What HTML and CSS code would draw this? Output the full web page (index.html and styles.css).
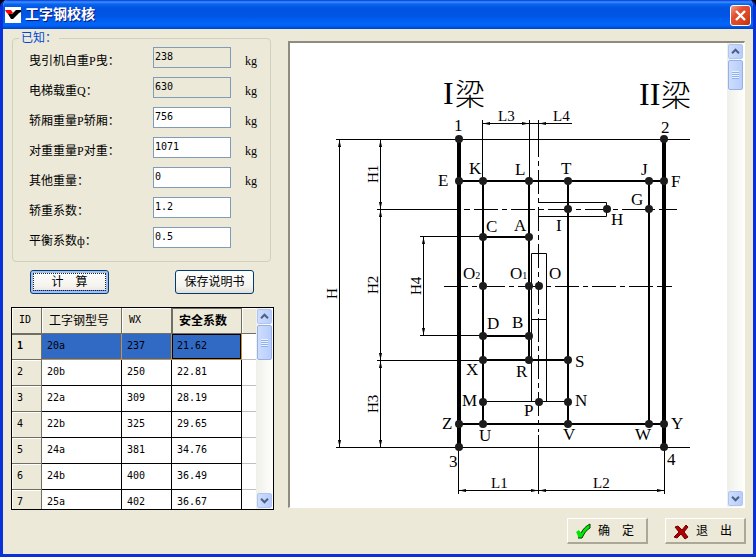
FILE: index.html
```html
<!DOCTYPE html>
<html lang="zh-CN">
<head>
<meta charset="utf-8">
<title>工字钢校核</title>
<link rel="stylesheet" href="styles.css">
</head>
<body>
<div class="window">
  <header class="titlebar">
    <svg class="app-icon" viewBox="0 0 16 16" aria-hidden="true">
      <rect width="16" height="16" fill="#fff"/>
      <path d="M5 6l2 1 4-4h5v2l-2 1-6 6H6L3 7z" fill="#000"/>
      <path d="M0 3h6l2 3-2 1H3L1 5z" fill="#f00"/>
    </svg>
    <h1>工字钢校核</h1>
    <button class="close" type="button" aria-label="关闭">
      <svg viewBox="0 0 19 19"><path d="M5 5l9 9M14 5l-9 9" stroke="#fff" stroke-width="2.4"/></svg>
    </button>
  </header>

  <main class="content">
    <section class="left">
      <fieldset>
        <legend>已知：</legend>
        <div class="field"><label for="f1">曳引机自重P曳：</label><input id="f1" type="text" value="238" readonly><span class="unit">kg</span></div>
        <div class="field"><label for="f2">电梯载重Q：</label><input id="f2" type="text" value="630" readonly><span class="unit">kg</span></div>
        <div class="field"><label for="f3">轿厢重量P轿厢：</label><input id="f3" type="text" value="756"><span class="unit">kg</span></div>
        <div class="field"><label for="f4">对重重量P对重：</label><input id="f4" type="text" value="1071"><span class="unit">kg</span></div>
        <div class="field"><label for="f5">其他重量：</label><input id="f5" type="text" value="0"><span class="unit">kg</span></div>
        <div class="field"><label for="f6">轿重系数：</label><input id="f6" type="text" value="1.2"></div>
        <div class="field"><label for="f7">平衡系数ф：</label><input id="f7" type="text" value="0.5"></div>
      </fieldset>
      <div class="actions">
        <button class="xp default" type="button">计　算</button>
        <button class="xp" type="button">保存说明书</button>
      </div>
      <div class="grid-box">
        <table>
          <colgroup><col class="c-id"><col class="c-model"><col class="c-wx"><col class="c-safe"><col></colgroup>
          <thead><tr><th>ID</th><th class="cjk">工字钢型号</th><th>WX</th><th class="cjk current">安全系数</th><th></th></tr></thead>
          <tbody>
            <tr class="selected"><th>1</th><td>20a</td><td>237</td><td class="focus">21.62</td><td class="rest"></td></tr>
            <tr><th>2</th><td>20b</td><td>250</td><td>22.81</td><td class="rest"></td></tr>
            <tr><th>3</th><td>22a</td><td>309</td><td>28.19</td><td class="rest"></td></tr>
            <tr><th>4</th><td>22b</td><td>325</td><td>29.65</td><td class="rest"></td></tr>
            <tr><th>5</th><td>24a</td><td>381</td><td>34.76</td><td class="rest"></td></tr>
            <tr><th>6</th><td>24b</td><td>400</td><td>36.49</td><td class="rest"></td></tr>
            <tr><th>7</th><td>25a</td><td>402</td><td>36.67</td><td class="rest"></td></tr>
          </tbody>
        </table>
        <div class="scroll">
          <button type="button" aria-label="向上"><svg viewBox="0 0 15 15"><path d="M3.5 9.500l4-4 4 4" class="chev"/></svg></button>
          <div class="thumb tall"><i></i></div>
          <div class="track"></div>
          <button type="button" aria-label="向下"><svg viewBox="0 0 15 15"><path d="M3.5 5.500l4 4 4-4" class="chev"/></svg></button>
        </div>
      </div>
    </section>

    <section class="drawing">
      <svg class="plan" viewBox="290 43 437 464" role="img" aria-label="工字钢布置图">
        <defs>
          <marker id="arrow" viewBox="0 0 7 4" refX="7" refY="2" markerWidth="7" markerHeight="4" markerUnits="userSpaceOnUse" orient="auto-start-reverse"><path d="M0 0.500L7 2L0 3.500z"/></marker>
        </defs>
        <g class="thin">
          <path d="M336 139.500H690M336 447.500H690M377 209.500H459M377 360.500H483M420 236.500H483M420 335.500H483M483 401.500H568"/>
          <path d="M482.500 120V181M529.500 120V181M458.500 447V494M664.500 447V494"/>
          <path d="M529 123.500H538M538.500 202.500H606.500V216.500H538.500M531.500 401V253.500H546.500V401M531.500 319.500H546.500"/>
          <path class="axis" d="M474 209.500H677M464 209.500h6"/>
          <path class="axis" d="M444 286.500H672"/>
          <path d="M538.500 120V157M538.500 435V494"/>
          <path class="axis" d="M538.500 170V432M538.500 161v5"/>
        </g>
        <g class="thin dims">
          <path d="M339.500 140V447"/><path d="M380.500 140V209"/><path d="M380.500 210V360"/><path d="M380.500 361V447"/>
          <path d="M423.500 237V335"/><path d="M483 123.500H529"/><path d="M459 490.500H538"/><path d="M539 490.500H664"/>
        </g>
        <path class="thin" d="M539 123.500H572" marker-start="url(#arrow)"/>
        <g class="bar"><path d="M459 181H664M483 237H529M483 336H529M483 360H568M459 424H664M483 181V424M529 181V360M568 181V424M649 181V424"/></g>
        <path class="beam" d="M459 139V447M664 139V447"/>
        <g class="nodes">
          <circle cx="459" cy="139" r="4"/><circle cx="664" cy="139" r="4"/>
          <circle cx="459" cy="181" r="4"/><circle cx="483" cy="181" r="4"/><circle cx="529" cy="181" r="4"/><circle cx="568" cy="181" r="4"/><circle cx="649" cy="181" r="4"/><circle cx="664" cy="181" r="4"/>
          <circle cx="568" cy="209" r="4"/><circle cx="607" cy="209" r="4"/><circle cx="649" cy="209" r="4"/>
          <circle cx="483" cy="237" r="4"/><circle cx="529" cy="237" r="4"/>
          <circle cx="483" cy="286" r="4"/><circle cx="529" cy="286" r="4"/><circle cx="539" cy="286" r="4"/>
          <circle cx="483" cy="336" r="4"/><circle cx="529" cy="336" r="4"/>
          <circle cx="483" cy="360" r="4"/><circle cx="529" cy="360" r="4"/><circle cx="568" cy="360" r="4"/>
          <circle cx="483" cy="402" r="4"/><circle cx="539" cy="402" r="4"/><circle cx="568" cy="402" r="4"/>
          <circle cx="459" cy="424" r="4"/><circle cx="483" cy="424" r="4"/><circle cx="568" cy="424" r="4"/><circle cx="649" cy="424" r="4"/><circle cx="664" cy="424" r="4"/>
          <circle cx="459" cy="447" r="4"/><circle cx="664" cy="447" r="4"/>
        </g>
        <g class="title">
          <text x="443" y="104">I</text><text x="455" y="105" class="han">梁</text>
          <text x="639" y="105">II</text><text x="661" y="106" class="han">梁</text>
        </g>
        <g class="pt">
          <text x="454" y="131">1</text><text x="661" y="133">2</text>
          <text x="438" y="186">E</text><text x="469" y="174">K</text><text x="515" y="175">L</text><text x="561" y="174">T</text><text x="641" y="175">J</text><text x="671" y="187">F</text>
          <text x="631" y="205">G</text><text x="611" y="225">H</text><text x="556" y="231">I</text>
          <text x="486" y="232">C</text><text x="514" y="231">A</text>
          <text x="463" y="279">O<tspan class="sub">2</tspan></text><text x="510" y="279">O<tspan class="sub">1</tspan></text><text x="549" y="279">O</text>
          <text x="487" y="329">D</text><text x="512" y="328">B</text>
          <text x="466" y="375">X</text><text x="516" y="377">R</text><text x="575" y="367">S</text>
          <text x="462" y="406">M</text><text x="524" y="416">P</text><text x="575" y="406">N</text>
          <text x="442" y="429">Z</text><text x="479" y="441">U</text><text x="563" y="440">V</text><text x="635" y="440">W</text><text x="671" y="429">Y</text>
          <text x="449" y="467">3</text><text x="667" y="465">4</text>
        </g>
        <g class="dim-text">
          <text x="498" y="121">L3</text><text x="553" y="121">L4</text><text x="491" y="488">L1</text><text x="593" y="488">L2</text>
          <text transform="translate(378 183) rotate(-90)">H1</text>
          <text transform="translate(378 294) rotate(-90)">H2</text>
          <text transform="translate(378 413) rotate(-90)">H3</text>
          <text transform="translate(421 295) rotate(-90)">H4</text>
          <text transform="translate(337 299) rotate(-90)">H</text>
        </g>
      </svg>
      <div class="scroll">
        <button type="button" aria-label="向上"><svg viewBox="0 0 15 15"><path d="M3.5 9.500l4-4 4 4" class="chev"/></svg></button>
        <div class="thumb"><i></i></div>
        <div class="track"></div>
        <button type="button" aria-label="向下"><svg viewBox="0 0 15 15"><path d="M3.5 5.500l4 4 4-4" class="chev"/></svg></button>
      </div>
    </section>
  </main>

  <footer class="footer">
    <button class="classic" type="button">
      <svg viewBox="0 0 18 18" aria-hidden="true"><path d="M2 10l3-2 2 3c2-4 5-7 9-9v4c-4 2-6 6-8 10H4c0-3-1-4-2-6z" fill="#00e800"/><path d="M16 2v4c-4 2-6 6-8 10H4M7 11c2-4 5-7 9-9" fill="none" stroke="#003c00" stroke-width="1"/></svg>
      <span>确　定</span>
    </button>
    <button class="classic" type="button">
      <svg viewBox="0 0 18 18" aria-hidden="true"><path d="M3 5l3-1 4 4 4-5 2 2-4 5 4 5-3 2-4-5-4 4-3-1 5-5z" fill="#b00000" stroke="#700000" stroke-width="1"/></svg>
      <span>退　出</span>
    </button>
  </footer>
</div>
</body>
</html>
```
FILE: styles.css
```css
* { box-sizing: border-box; }

body {
  margin: 0;
  background: #000;
  color: #000;
  font: 12px/14px "Liberation Serif", "Noto Sans CJK SC", serif;
}

button { padding: 0; font: inherit; color: inherit; }

.window {
  display: flex;
  flex-direction: column;
  height: 100vh;
  min-height: 540px;
  overflow: hidden;
  border: solid #0831d9;
  border-width: 0 3px 3px;
  border-radius: 7px 7px 0 0;
  background: #ece9d8;
}

.titlebar {
  display: flex;
  flex: none;
  align-items: center;
  gap: 4px;
  height: 29px;
  margin: 0 -3px;
  padding: 1px 5px 0;
  background: linear-gradient(#0831d9 0, #3a93ff 2px, #0a65ee 4px, #0054e3 8px, #0055e5 16px, #0266fb 24px, #0060f0 26px, #0040c8 29px);
}

.app-icon { width: 16px; height: 16px; }

h1 {
  flex: 1;
  margin: 0;
  color: #fff;
  font-size: 14px;
  line-height: 18px;
  text-shadow: 1px 1px #0a1883;
}

.close {
  width: 21px;
  height: 21px;
  border: 1px solid #fff;
  border-radius: 3px;
  background: linear-gradient(135deg, #f0a088, #e25033 35%, #da4420 70%, #b83010);
}

.close svg { display: block; width: 19px; height: 19px; }

.content {
  display: grid;
  flex: 1;
  grid-template-columns: 263fr 457fr;
  gap: 14px;
  min-height: 0;
  padding: 0 8px;
}

.left {
  display: flex;
  flex-direction: column;
  min-width: 0;
  min-height: 0;
  padding-top: 3px;
}

fieldset {
  display: flex;
  flex-direction: column;
  gap: 9px;
  min-width: 0;
  margin: 0 3px 0 1px;
  padding: 3px 0 13px 16px;
  border: 1px solid #d0d0bf;
  border-radius: 4px;
}

legend {
  margin-left: -10px;
  padding: 0 2px;
  color: #0046d5;
  line-height: 12px;
}

.field {
  display: grid;
  grid-template-columns: 110px 78px 1fr;
  column-gap: 14px;
  height: 21px;
}

.field label { padding-top: 7px; white-space: nowrap; }
.unit { padding-top: 7px; }

.field input {
  width: 100%;
  height: 21px;
  padding: 0 1px 3px;
  border: 1px solid #7f9db9;
  border-radius: 0;
  outline: 0;
  background: #fff;
  color: #000;
  font: 10px/14px "DejaVu Sans Mono", monospace;
}

.field input[readonly] { background: #ece9d8; }

.actions {
  display: flex;
  gap: 66px;
  padding: 8px 0 13px 19px;
}

.xp {
  width: 79px;
  height: 24px;
  border: 1px solid #003c74;
  border-radius: 3px;
  background: linear-gradient(#fff, #f4f3ee 70%, #e2dfd6);
  white-space: nowrap;
}

.xp.default {
  outline: 1px dotted #222;
  outline-offset: -4px;
  box-shadow: inset 0 0 0 2px #a4c0f0, inset 0 -3px #6982ee;
}

.grid-box {
  display: flex;
  flex: 1 1 0;
  min-height: 0;
  overflow: hidden;
  border: 1px solid #000;
  background: #fff;
}

table {
  flex: 1;
  min-width: 0;
  height: 208px;
  border-spacing: 0;
  table-layout: fixed;
  font: 10px/14px "DejaVu Sans Mono", "Noto Sans CJK SC", monospace;
}

.c-id { width: 30px; }
.c-model { width: 80px; }
.c-wx { width: 50px; }
.c-safe { width: 70px; }

th, td {
  height: 26px;
  padding: 0 0 2px 5px;
  border: solid #000;
  border-width: 0 1px 1px 0;
  font-weight: 400;
  text-align: left;
  white-space: nowrap;
}

th {
  border-color: #716f64;
  background: #ece9d8;
  box-shadow: inset 1px 1px #fff;
}

thead th { padding-left: 7px; }
thead th:last-child, .rest { border-right: 0; }
.rest { border-color: #c0c0c0; }
.cjk { font: 12px/14px "Noto Sans CJK SC", sans-serif; }
.current { font-weight: 700; box-shadow: inset 1px 1px #716f64; }
.selected th { font-weight: 700; box-shadow: inset 0 1px #716f64; }
.selected td { border-color: #d09030; background: #316ac5; }
.selected .focus { box-shadow: inset 0 0 0 1px #000; }
.selected .rest { border-color: #c0c0c0; background: #fff; }

.scroll {
  display: flex;
  flex: none;
  flex-direction: column;
  align-items: center;
  gap: 1px;
  width: 17px;
  padding: 1px 0;
  background: linear-gradient(90deg, #f0f0ea, #fefefb);
}

.scroll button, .thumb {
  flex: none;
  width: 15px;
  height: 15px;
  border: 1px solid #b0c4f4;
  border-radius: 2px;
  background: linear-gradient(90deg, #cdddfd, #b8cdfa);
}

.scroll svg { display: block; width: 13px; height: 13px; }
.chev { fill: none; stroke: #4d6185; stroke-width: 2.4; }
.track { flex: 1; }

.thumb {
  display: flex;
  align-items: center;
  justify-content: center;
  height: 30px;
  border-color: #98b0e8;
}

.thumb.tall { height: 35px; }

.thumb i {
  width: 7px;
  height: 8px;
  background: repeating-linear-gradient(#eef4fe 0 1px, #8cb0f8 1px 2px);
}

.drawing {
  display: flex;
  min-width: 0;
  min-height: 0;
  margin: 12px 0 2px;
  border: solid;
  border-width: 2px 1px 1px 2px;
  border-color: #8f8c7f #fff #fff #8f8c7f;
  background: #fff;
}

.plan { flex: 1; min-width: 0; height: 100%; }
.thin { fill: none; stroke: #000; stroke-width: 1; }
.axis { stroke-dasharray: 24 4 5 4; }
.dims path { marker-start: url(#arrow); marker-end: url(#arrow); }
.bar { fill: none; stroke: #000; stroke-width: 2; }
.beam { stroke: #000; stroke-width: 4; }
.nodes { fill: #1c1c1c; }
.title { font-size: 32px; }
.han { font-family: "Noto Sans CJK SC", sans-serif; font-size: 30px; font-weight: 300; }
.pt { font-size: 17px; }
.sub { font-size: 10px; }
.dim-text { font-size: 15px; }

.footer {
  display: flex;
  flex: none;
  justify-content: flex-end;
  gap: 17px;
  padding: 8px 7px 10px;
}

.classic {
  display: flex;
  align-items: center;
  gap: 6px;
  width: 81px;
  height: 26px;
  padding-left: 6px;
  border: solid;
  border-width: 1px 2px 2px 1px;
  border-color: #fff #aca899 #aca899 #fff;
  background: #ece9d8;
}

.classic svg { width: 18px; height: 18px; }
```
